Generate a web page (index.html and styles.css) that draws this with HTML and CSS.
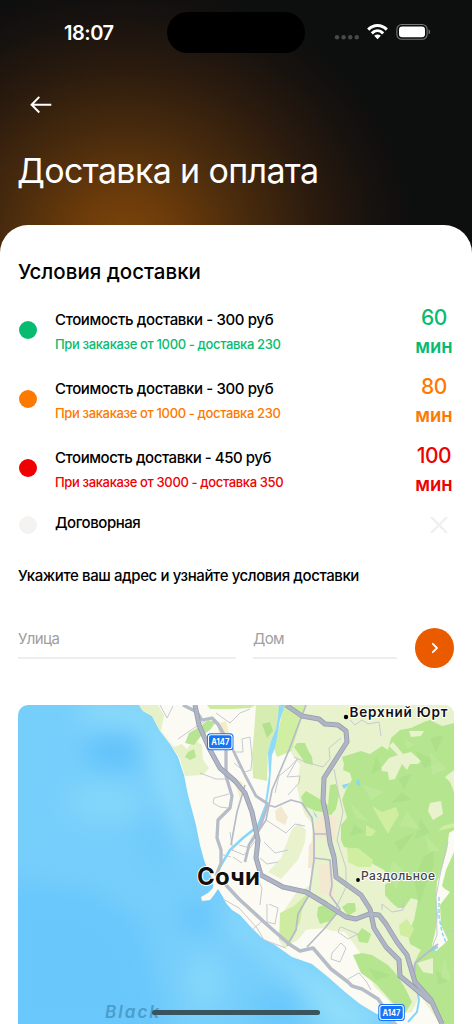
FILE: index.html
```html
<!DOCTYPE html>
<html lang="ru">
<head>
    <meta charset="UTF-8">
    <meta name="viewport" content="width=device-width, initial-scale=1.0">
    <title>Доставка и оплата</title>
    <link rel="stylesheet" href="styles.css">
</head>
<body>

    <header class="header">
        <div class="status-bar">
            <span class="clock">18:07</span>
            <div class="island"></div>
            <svg class="status-icons" width="98" height="20" viewBox="0 0 98 20">
                <g fill="#4a4949">
                    <circle cx="5" cy="15.3" r="2.2"/>
                    <circle cx="11.6" cy="15.3" r="2.2"/>
                    <circle cx="18.2" cy="15.3" r="2.2"/>
                    <circle cx="24.8" cy="15.3" r="2.2"/>
                </g>
                <g fill="none" stroke="#fff" stroke-width="3">
                    <path d="M36.2 7.6C41.5 2.2 49.5 2.2 54.8 7.6"/>
                    <path d="M39.8 11.3C43.2 8 47.8 8 51.2 11.3"/>
                </g>
                <path fill="#fff" d="M42.2 13.7C44.2 12 46.8 12 48.8 13.7L45.5 17.2Z"/>
                <rect x="64.9" y="2.5" width="30.2" height="14.8" rx="4.8" fill="none" stroke="#777" stroke-width="1.1"/>
                <rect x="67" y="4.6" width="26" height="10.6" rx="3.2" fill="#fff"/>
                <path fill="#777" d="M96.6 7.3C98.6 8 98.6 11.8 96.6 12.5Z"/>
            </svg>
        </div>
        <a class="back" href="#">
            <svg width="22" height="18" viewBox="0 0 22 18" fill="none" stroke="#fff" stroke-width="2">
                <path d="M21.3 8.7H1.8M9.3 0.9L1.6 8.7L9.3 16.5"/>
            </svg>
        </a>
        <h1>Доставка и оплата</h1>
    </header>

    <main class="card">
        <h2>Условия доставки</h2>

        <div class="zone green">
            <span class="dot"></span>
            <div class="info">
                <p class="price">Стоимость доставки - 300 руб</p>
                <p class="note">При закаказе от 1000 - доставка 230</p>
            </div>
            <div class="time"><b>60</b><span>мин</span></div>
        </div>
        <div class="zone orange">
            <span class="dot"></span>
            <div class="info">
                <p class="price">Стоимость доставки - 300 руб</p>
                <p class="note">При закаказе от 1000 - доставка 230</p>
            </div>
            <div class="time"><b>80</b><span>мин</span></div>
        </div>
        <div class="zone red">
            <span class="dot"></span>
            <div class="info">
                <p class="price">Стоимость доставки - 450 руб</p>
                <p class="note">При закаказе от 3000 - доставка 350</p>
            </div>
            <div class="time"><b>100</b><span>мин</span></div>
        </div>
        <div class="zone custom">
            <span class="dot"></span>
            <div class="info">
                <p class="price">Договорная</p>
            </div>
            <svg class="cross" width="18" height="18" viewBox="0 0 18 18" stroke="#f1f0ef" stroke-width="2.4" stroke-linecap="round">
                <path d="M1.7 1.7L16.3 16.3M16.3 1.7L1.7 16.3"/>
            </svg>
        </div>

        <p class="prompt">Укажите ваш адрес и узнайте условия доставки</p>

        <form class="address">
            <label class="field street">Улица</label>
            <label class="field house">Дом</label>
            <button type="button" class="go">
                <svg width="8" height="12" viewBox="0 0 8 12" fill="none" stroke="#fff" stroke-width="1.8" stroke-linecap="round" stroke-linejoin="round">
                    <path d="M1.8 1.8L6 6L1.8 10.2"/>
                </svg>
            </button>
        </form>

        <div class="map">
            <svg width="436" height="319" viewBox="18 705 436 319">
                <defs>
                    <filter id="soft" x="-50%" y="-50%" width="200%" height="200%"><feGaussianBlur stdDeviation="12"/></filter>
                </defs>

                <!-- sea -->
                <rect x="18" y="705" width="436" height="319" fill="#76cefb"/>
                <g filter="url(#soft)">
                    <path fill="#69c7fc" d="M0 880L90 890L140 920L170 1040H0Z"/>
                    <ellipse cx="114" cy="750" rx="28" ry="20" fill="#62c3fb"/>
                    <path fill="#8adafa" d="M80 700H150L165 735L80 724Z"/>
                    <path fill="#92defb" d="M145 725L170 735L200 860L188 850L160 795Z"/>
                    <ellipse cx="105" cy="802" rx="38" ry="20" fill="#82d7fa"/>
                    <ellipse cx="155" cy="845" rx="18" ry="30" fill="#6fcbfc"/>
                    <ellipse cx="198" cy="917" rx="18" ry="15" fill="#66c5fc"/>
                    <path fill="#92defb" d="M218 895L262 940L330 980L395 1030L330 1035L300 985L232 930Z"/>
                    <ellipse cx="205" cy="982" rx="18" ry="30" fill="#85d8fb"/>
                    <ellipse cx="278" cy="1010" rx="24" ry="20" fill="#68c7fc"/>
                </g>

                <!-- land -->
                <path fill="#fcfbf3" d="M139 705L143 711L152 716L160 731L170 744L178 757L184 775L188 795L196 825L200 845L204 860L207 868L213 880L213 888L208 893L201 897L202 901L210 900L214 895L218 889L223 897L226 903L232 910L240 915L250 926L262 938L275 945L292 957L312 964L328 977L345 992L360 1004L375 1013L392 1020L398 1024H454V705Z"/>
                <path fill="#e5f1c7" d="M139 705H158L164 715L161 731L174 747L182 744L187 749L194 739L202 745L203 760L209 768L203 775L185 776L180 759L170 743L160 731L152 716L143 711Z"/>
                <path fill="#b7e593" d="M185 743L189 733L199 727L208 720L216 722L210 730L201 736L194 745ZM188 752L194 749L196 757L190 760L185 757Z"/>
                <path fill="#ccea9e" d="M207 705H256L250 708L232 709H210Z"/>
                <path fill="#d7ecb0" d="M256 705H281L276 730L271 741L268 752L267 781L253 778L252 755L254 733Z"/>
                <path fill="#d0efa2" d="M284 705H306L292 751L277 757L274 748L278 732Z"/>
                <path fill="#b3e08f" d="M262 724L270 722L273 731L267 738Z"/>
                <path fill="#e8f3cd" d="M306 705H454V1024H440L420 995L412 1012L399 1014L386 1001L374 987L364 962L352 942L325 928L306 930L298 940L284 948L279 940L281 915L296 893L311 885V850L313 824L305 815L300 801L297 787L300 765L291 753Z"/>
                <path fill="#fcfbf3" d="M310 929L345 932L354 944L365 960L373 985L388 1000L398 1013L375 1012L345 988L300 952Z"/>
                <path fill="#e8f3cd" d="M287 842L292 829L299 823L306 830L305 842L298 860L281 879L268 872L281 858Z"/>
                <path fill="#cdeca0" d="M280 913L294 906L308 893L302 910L300 922L289 942L279 940Z"/>
                <path fill="#f3e8d0" d="M316 820L325 812L337 817L335 840L315 837ZM309 845L316 838L314 868H308ZM318 866L332 862L335 898L320 893ZM275 811L281 806L288 817L285 825L276 820Z"/>
                <path fill="#f5ecc8" d="M217 724L226 721L229 734L220 740ZM232 776L243 783L240 798L237 789Z"/>

                <!-- forest -->
                <path fill="#b5e58f" d="M342 757L361 751L370 754L382 746L388 750L391 738L400 730L411 728L424 722L430 720L442 726L454 723V1024H443L433 1004L415 978L412 968L418 955L421 950L410 944L408 934L414 920L418 900L411 898L404 908H398L391 902L385 895V885L390 880L384 870L373 864L360 850L344 847L341 840L341 825L347 818L342 800L347 787L352 780L350 773L343 770L344 764Z"/>
                <path fill="#b5e58f" d="M294 747L297 743H305L308 750L312 757L313 765L305 763L301 757ZM301 797L306 791L318 798L328 805L330 785L336 784L339 795L336 809L331 815L322 812L316 811L304 806ZM317 916L318 907L328 904L338 914L330 921L320 924ZM342 907L348 903H355L356 911L348 916ZM357 935L362 928L371 934L368 943L359 942ZM353 955L362 953L372 955L388 965L397 975L405 988L412 1002L404 1015L390 1000L376 984L361 973Z"/>
                <path fill="#e8f3cd" d="M381 768L389 758L398 755L392 749L389 746L393 742L403 754L411 752L421 761L418 764L410 764L407 770L402 764L395 779L389 780L388 772L382 771ZM409 731L424 731L421 736L411 737ZM428 811L430 803L441 801L443 814L433 820ZM454 770L445 777L450 782L454 792ZM417 963L433 958V974L423 972Z"/>
                <path fill="#cfeea0" d="M372 806L382 812L396 807L399 815L392 826L388 834L380 820ZM366 825L376 831L372 836H366ZM347 848H358L373 860L371 867H358L348 862ZM399 925L407 919L414 929L410 938L400 935ZM454 827L438 831L443 826L454 823Z"/>
                <path fill="#a5d982" opacity=".4" d="M423 858L434 850L433 868L426 885L419 905L414 880ZM391 803L402 792L412 800ZM354 824L365 832L350 836ZM415 751L440 762L424 768ZM376 757L382 769L371 774ZM394 842L414 833L400 852ZM436 970L448 981L438 985ZM368 968L391 975L376 980ZM430 738L444 735L436 752ZM398 778L412 774L404 790ZM420 818L430 833L415 839Z"/>
                <path fill="#c1eba1" opacity=".55" d="M404 739L415 745L407 749ZM430 753L447 769L432 775ZM362 784L384 792L371 800ZM407 811L421 830L399 826ZM350 802L369 822L356 818ZM425 835L440 851L429 852ZM444 957L451 981L441 978ZM393 860L404 872L396 890L388 875Z"/>
                <path fill="#fcfbf3" d="M454 830L449 833L447 850L441 872L437 882L436 897L438 915L435 933L432 945L436 951L443 945L448 940L441 925L440 905L450 892L445 889L442 886L446 870L454 852Z"/>

                <!-- water -->
                <path fill="#8ddafb" d="M279 705H285L280 720L278 732L275 748L272 755L270 784L267 803H265L269 775L268 752L271 741L276 729L278 718Z"/>
                <g fill="none" stroke="#83d7fa">
                    <path d="M267 803L258 826L243 838L230 850L218 870" stroke-width="2.5"/>
                    <path d="M439 897L439 917L442 932L446 943" stroke-width="1.4" stroke-dasharray="4 2"/>
                    <path d="M438 947L428 952M416 983L419 1000L417 1012L408 1022" stroke-width="2"/>
                </g>
                <path fill="#83d7fa" d="M342 785L350 783L344 789ZM356 782L359 779L360 786L357 785ZM313 810L318 818L315 816Z"/>

                <!-- small streets -->
                <g fill="none" stroke="#c6c9d1" stroke-width="1">
                    <path d="M160 705L167 718L173 706M178 739L197 726L210 718M200 773L216 779L226 779M229 794L214 798L213 803L220 807L228 808"/>
                    <path d="M216 713L230 723L240 713L250 709M235 752L243 752L242 739L250 737L252 758L251 770L245 772L234 763"/>
                    <path d="M294 757L305 762L323 767L330 759L329 748L341 738M350 720L355 725L362 720L368 724L379 722L381 736"/>
                    <path d="M275 793L279 776L290 767L298 758L287 777L300 776L299 783L288 795M334 769L338 790L343 812L337 840L346 868L346 887L336 908"/>
                    <path d="M264 842L275 853L288 850M266 820L286 833L295 824L305 826M256 876L262 888L260 905M269 904L278 908L275 924L267 922L267 904M382 910V904L392 912L403 910V901"/>
                    <path d="M223 899L239 908L257 928L264 940L286 948M341 927L358 934L348 939L338 932L340 927M332 953L341 943L346 948L340 962L331 959ZM348 979L359 973L366 981L371 990M252 930L262 921"/>
                    <path d="M230 832L233 851M232 850L244 855L258 838M239 845L250 848M233 857L242 863M220 854L231 857M260 858L267 864L278 862"/>
                    <path d="M448 842L441 870L436 897L437 935L433 945L435 948M445 933L454 930"/>
                </g>

                <!-- secondary roads -->
                <g fill="none" stroke="#b7bcc9" stroke-linejoin="round">
                    <path d="M183 705L197 712L202 720L212 718L218 724L226 740L226 776L232 796L230 808L218 820L217 838L221 850L221 863L216 876" stroke-width="3.3"/>
                    <path d="M212 718L220 727L232 748L245 775L256 796L268 804L260 827L249 845L245 862" stroke-width="2.8"/>
                    <path d="M268 805L275 807L291 800L302 803L312 818L314 834V860L309 895L298 914L296 930L287 946" stroke-width="1.8"/>
                    <path d="M306 705L289 750L272 790L266 820L251 843M245 785L237 812L231 845" stroke-width="1.7"/>
                    <path d="M313 834H326M314 858L330 860L332 885L330 895L340 909L325 928L307 947" stroke-width="1.7"/>
                    <path d="M225 884L239 899L264 922L289 944L300 951L313 948L331 969L348 982L352 986L362 989L378 999L395 1024" stroke-width="3.6"/>
                    <path d="M438 944L415 963L414 983" stroke-width="1.8"/>
                </g>

                <!-- highways: dark casing, then lighter fill -->
                <g fill="none" stroke="#969dad" stroke-linejoin="round" stroke-width="5">
                    <path d="M195 705L199 725L209 748L220 768L235 781L245 793L252 812L258 840L256 858L261 875L283 887L306 892L326 904L346 917L356 919L369 914L379 915L386 924L397 942L407 955L415 982L431 1000L442 1024"/>
                    <path d="M286 705L302 716L319 719L325 724L338 725L346 731L347 742L338 756L324 778L323 800L327 820L330 843L334 857L336 877L361 895L370 909L374 928L386 947L399 960L400 976L431 1002"/>
                </g>
                <g fill="none" stroke="#afb5c4" stroke-linejoin="round" stroke-width="3.4">
                    <path d="M195 705L199 725L209 748L220 768L235 781L245 793L252 812L258 840L256 858L261 875L283 887L306 892L326 904L346 917L356 919L369 914L379 915L386 924L397 942L407 955L415 982L431 1000L442 1024"/>
                    <path d="M286 705L302 716L319 719L325 724L338 725L346 731L347 742L338 756L324 778L323 800L327 820L330 843L334 857L336 877L361 895L370 909L374 928L386 947L399 960L400 976L431 1002"/>
                </g>

                <!-- labels -->
                <g class="shield">
                    <rect x="207" y="733.2" width="26.5" height="17" rx="3.5" fill="#1774f4"/>
                    <rect x="208.5" y="734.7" width="23.5" height="14" rx="2.5" fill="none" stroke="#fff" stroke-width="1.1"/>
                    <text x="220.3" y="745.3" textLength="18" lengthAdjust="spacingAndGlyphs">A147</text>
                    <rect x="378.3" y="1004" width="26.5" height="17" rx="3.5" fill="#1774f4"/>
                    <rect x="379.8" y="1005.5" width="23.5" height="14" rx="2.5" fill="none" stroke="#fff" stroke-width="1.1"/>
                    <text x="391.5" y="1016.1" textLength="18" lengthAdjust="spacingAndGlyphs">A147</text>
                </g>
                <circle cx="346" cy="717" r="2.2"/>
                <circle cx="358" cy="880" r="1.9"/>
                <text class="place" x="349.5" y="716.5" textLength="98">Верхний Юрт</text>
                <text class="village" x="361" y="880" textLength="74">Раздольное</text>
                <text class="city" x="197" y="885" textLength="63">Сочи</text>
                <text class="sea" x="105" y="1018" textLength="54">Black</text>
            </svg>
            <div class="home-bar"></div>
        </div>
    </main>

</body>
</html>
```

FILE: styles.css
```css
* {
    box-sizing: border-box;
}
body {
    margin: 0;
    height: 1024px;
    overflow: hidden;
    font-family: Inter, "Noto Sans", sans-serif;
    color: #000;
    background: #0d0e0e radial-gradient(ellipse 290px 260px at 125px 240px, #7c450a 0%, #6b3b0a 18%, #4b2c0d 40%, #2b1b0e 66%, #17120e 86%, #0d0e0e 100%) no-repeat;
}
h1, h2, p {
    margin: 0;
    font-weight: 500;
    white-space: nowrap;
}
.header {
    height: 225px;
    padding-top: 12px;
}
.status-bar {
    display: flex;
    height: 41px;
    padding-left: 64px;
}
.clock {
    width: 103px;
    color: #fff;
    font-size: 20px;
    font-weight: 600;
    line-height: 42px;
    letter-spacing: -0.5px;
}
.island {
    width: 138px;
    height: 41px;
    border-radius: 21px;
    background: #000;
}
.status-icons {
    margin: 10px 0 0 27px;
}
.back {
    display: block;
    width: 22px;
    height: 18px;
    margin: 43px 0 0 30px;
}
.back svg {
    display: block;
}
h1 {
    margin: 35px 0 0 17px;
    color: #fff;
    font-size: 34px;
    font-weight: 400;
    line-height: 44px;
    letter-spacing: -0.65px;
}
.card {
    height: 799px;
    padding: 33px 18px 0;
    border-radius: 28px 28px 0 0;
    background: #fff;
    overflow: hidden;
}
h2 {
    height: 47px;
    font-size: 20.5px;
    line-height: 27px;
}
.zone {
    display: flex;
    height: 50px;
    margin-bottom: 19px;
    align-items: center;
}
.dot {
    width: 18px;
    height: 18px;
    margin: 0 18px 0 1px;
    border-radius: 50%;
    background: currentColor;
}
.info {
    flex: 1;
    height: 50px;
    padding-top: 4px;
}
.price {
    color: #000;
    font-size: 15px;
    line-height: 22px;
    letter-spacing: -0.37px;
}
.red .price {
    letter-spacing: -0.45px;
}
.note {
    padding-top: 3px;
    font-size: 13px;
    line-height: 20px;
    letter-spacing: -0.36px;
}
.time {
    display: flex;
    flex-direction: column;
    width: 40px;
    padding-top: 3px;
    align-items: center;
    font-size: 18.5px;
    font-weight: 600;
    line-height: 28px;
    white-space: nowrap;
}
.time b {
    font-size: 21px;
    font-weight: 500;
    letter-spacing: -0.5px;
}
.green {
    color: #08bb70;
}
.orange {
    color: #fe7900;
}
.red {
    color: #f00000;
}
.custom {
    height: 25px;
    margin-bottom: 0;
    color: #f4f3f2;
}
.custom .info {
    height: 25px;
    padding-top: 0;
}
.custom .price {
    line-height: 21px;
    letter-spacing: -0.45px;
}
.cross {
    margin-right: 6px;
}
.prompt {
    margin-top: 28px;
    font-size: 15px;
    line-height: 22px;
    letter-spacing: -0.4px;
}
.address {
    display: flex;
    height: 40px;
    margin: 41px 0 37px;
}
.field {
    height: 31px;
    border-bottom: 2px solid #eee;
    color: #a0a0a0;
    font-size: 15px;
    line-height: 21px;
    letter-spacing: -0.6px;
}
.street {
    width: 218px;
    margin-right: 17px;
}
.house {
    width: 144px;
    margin-right: 18px;
}
.go {
    display: flex;
    width: 39px;
    height: 40px;
    padding: 0;
    border: none;
    border-radius: 50%;
    background: #ea5b00;
    align-items: center;
    justify-content: center;
}
.map {
    position: relative;
    height: 319px;
    border-radius: 10px 10px 0 0;
    overflow: hidden;
}
.map svg {
    display: block;
}
.map text {
    stroke: #fff;
    stroke-width: 2px;
    paint-order: stroke;
    stroke-linejoin: round;
    fill: #111;
}
.map .shield text {
    font-size: 9px;
    font-weight: 700;
    text-anchor: middle;
    fill: #fff;
    stroke: none;
}
.map .place {
    font-size: 13.5px;
    font-weight: 600;
}
.map .village {
    font-size: 12px;
    font-weight: 500;
    fill: #444;
}
.map .city {
    font-size: 24px;
    font-weight: 700;
}
.map .sea {
    font-size: 17px;
    font-weight: 600;
    font-style: italic;
    fill: #4b9dcb;
    stroke: none;
}
.home-bar {
    position: absolute;
    left: 134px;
    bottom: 9px;
    width: 168px;
    height: 5px;
    border-radius: 3px;
    background: #38545f;
}
```
